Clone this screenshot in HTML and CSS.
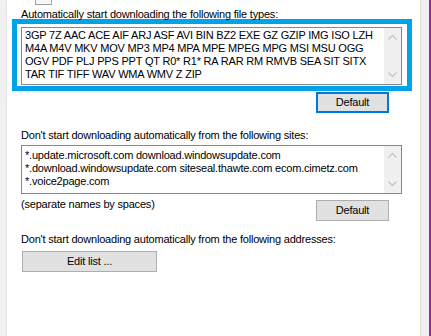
FILE: index.html
```html
<!DOCTYPE html>
<html lang="en">
<head>
  <meta charset="UTF-8" />
  <title>Download file types</title>
  <link rel="stylesheet" href="styles.css">
</head>
<body>
  <div class="window">
    <div class="edge-left"></div>

    <div class="panel">
      <!-- tail of the checkbox from the group above -->
      <div class="check-tail"></div>

      <div class="label first">Automatically start downloading the following file types:</div>
      <div class="highlight">
        <div class="listbox tall">
          <div class="listText">
            <div>3GP 7Z AAC ACE AIF ARJ ASF AVI BIN BZ2 EXE GZ GZIP IMG ISO LZH</div>
            <div>M4A M4V MKV MOV MP3 MP4 MPA MPE MPEG MPG MSI MSU OGG</div>
            <div>OGV PDF PLJ PPS PPT QT R0* R1* RA RAR RM RMVB SEA SIT SITX</div>
            <div>TAR TIF TIFF WAV WMA WMV Z ZIP</div>
          </div>
          <div class="scrollbar">
            <svg width="17" height="17" viewBox="0 0 17 17"><path d="M4.5 10.5 L8.5 6.5 L12.5 10.5" fill="none" stroke="#c4c4c4" stroke-width="1.3"/></svg>
            <svg width="17" height="17" viewBox="0 0 17 17"><path d="M4.5 6.5 L8.5 10.5 L12.5 6.5" fill="none" stroke="#c4c4c4" stroke-width="1.3"/></svg>
          </div>
        </div>
      </div>
      <div class="buttonRow first">
        <button class="winButton focused">Default</button>
      </div>

      <div class="label second">Don't start downloading automatically from the following sites:</div>
      <div class="listbox short">
        <div class="listText sites">
          <div>*.update.microsoft.com download.windowsupdate.com</div>
          <div>*.download.windowsupdate.com siteseal.thawte.com ecom.cimetz.com</div>
          <div>*.voice2page.com</div>
        </div>
        <div class="scrollbar">
          <svg width="17" height="17" viewBox="0 0 17 17"><path d="M4.5 10.5 L8.5 6.5 L12.5 10.5" fill="none" stroke="#c4c4c4" stroke-width="1.3"/></svg>
          <svg width="17" height="17" viewBox="0 0 17 17"><path d="M4.5 6.5 L8.5 10.5 L12.5 6.5" fill="none" stroke="#c4c4c4" stroke-width="1.3"/></svg>
        </div>
      </div>
      <div class="hintRow">
        <span class="hint">(separate names by spaces)</span>
        <button class="winButton">Default</button>
      </div>

      <div class="label third">Don't start downloading automatically from the following addresses:</div>
      <button class="winButton wide">Edit list ...</button>
    </div>

    <div class="edge-right"></div>
  </div>
</body>
</html>
```

FILE: styles.css
```css
/* Base */
* { box-sizing: border-box; margin: 0; padding: 0; }
body {
  font-family: "Liberation Sans", Arial, sans-serif;
  font-size: 11px;
  line-height: 13px;
  letter-spacing: -0.2px;
  color: #000;
  background: #fff;
  overflow: hidden;
}
.window {
  display: flex;
  height: 336px;
  width: 431px;
}
/* Side strips */
.edge-left {
  width: 7px;
  background: #f0f0f0;
  border-right: 1px solid #e3e3e3;
}
.edge-right {
  width: 11px;
  background: #f0f0f0;
  border-left: 1px solid #dadada;
  border-right: 2px solid #a1259f;
}
/* Main panel */
.panel {
  width: 413px;
  padding-left: 14px;
  background: #fff;
}
.check-tail {
  width: 17px;
  height: 5px;
  margin-left: 14px;
  background: #f7f7f7;
  border: 1px solid #a0a0a0;
  border-top: none;
}
.label { white-space: nowrap; }
.label.first { margin-top: 3px; }
.label.second { margin-top: 16px; }
.label.third { margin-top: 12px; }
/* Blue annotation frame */
.highlight {
  margin-top: -2px;
  margin-left: -9px;
  width: 400px;
  border: 5px solid #00a2e8;
  padding: 3px 5px 1px 4px;
  background: #fff;
}
/* List boxes */
.listbox {
  width: 381px;
  display: flex;
  border: 1px solid #828790;
  background: #fff;
}
.listbox.tall { height: 58px; }
.listbox.short { height: 49px; margin-top: 3px; }
.listText {
  flex: 1;
  padding: 1px 0 0 3px;
  white-space: nowrap;
  overflow: hidden;
}
.listText.sites { padding-top: 3px; }
.scrollbar {
  width: 17px;
  background: #f0f0f0;
  display: flex;
  flex-direction: column;
  justify-content: space-between;
  padding: 1px 0;
}
.scrollbar svg { display: block; }
/* Buttons */
.buttonRow {
  width: 381px;
  display: flex;
  justify-content: flex-end;
  padding-right: 13px;
}
.buttonRow.first { margin-top: 1px; }
.winButton {
  font-family: inherit;
  font-size: 11px;
  line-height: 13px;
  letter-spacing: -0.2px;
  color: #000;
  width: 73px;
  height: 21px;
  background: #e1e1e1;
  border: 1px solid #adadad;
}
.winButton.focused {
  border-color: #0078d7;
  box-shadow: inset 0 0 0 1px #0078d7;
}
.winButton.wide {
  width: 135px;
  margin: 5px 0 0 1px;
}
.hintRow {
  width: 381px;
  display: flex;
  justify-content: space-between;
  align-items: flex-start;
  padding-right: 13px;
}
.hint { margin-top: 4px; }
.hintRow .winButton { margin-top: 6px; }
```
